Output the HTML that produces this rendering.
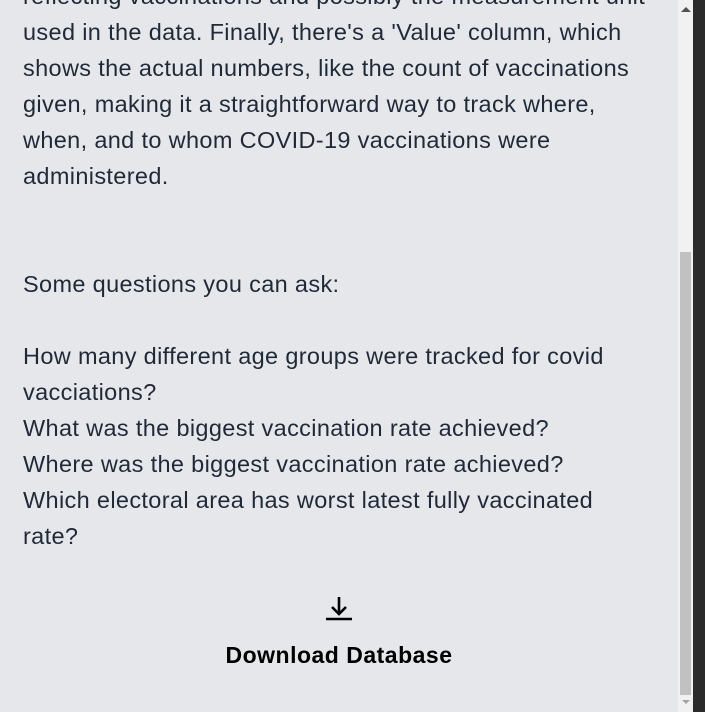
<!DOCTYPE html>
<html><head><style>
html,body{margin:0;padding:0;}
body{width:705px;height:712px;overflow:hidden;background:#e5e7eb;position:relative;font-family:"Liberation Sans",sans-serif;color:#1f2937;}
.t{position:absolute;left:23px;top:-22px;font-size:23.5px;letter-spacing:0.35px;line-height:36px;white-space:nowrap;}
.sb{position:absolute;left:678px;top:0;width:15px;height:712px;background:#f1f1f1;}
.th{position:absolute;left:680px;top:252px;width:11px;height:443px;background:#c1c1c1;}
.dk{position:absolute;left:693px;top:0;width:12px;height:712px;background:#2b2b2b;}
.dl{position:absolute;left:0;width:678px;text-align:center;top:642px;font-weight:bold;font-size:23px;letter-spacing:0.5px;color:#000;}
</style></head><body>
<div class="t">reflecting vaccinations and possibly the measurement unit<br>used in the data. Finally, there's a 'Value' column, which<br>shows the actual numbers, like the count of vaccinations<br>given, making it a straightforward way to track where,<br>when, and to whom COVID-19 vaccinations were<br>administered.<br><br><br>Some questions you can ask:<br><br>How many different age groups were tracked for covid<br>vacciations?<br>What was the biggest vaccination rate achieved?<br>Where was the biggest vaccination rate achieved?<br>Which electoral area has worst latest fully vaccinated<br>rate?</div>
<svg style="position:absolute;left:325px;top:594px" width="28" height="28" viewBox="0 0 28 28"><path d="M14 3V20M7 13l7 7 7-7" stroke="#000" stroke-width="2.6" fill="none"/><path d="M1 25H27" stroke="#000" stroke-width="2.6"/></svg>
<div class="dl">Download Database</div>
<div class="sb"></div><div class="th"></div><div class="dk"></div>
<div style="position:absolute;left:681px;top:7px;width:0;height:0;border-left:5px solid transparent;border-right:5px solid transparent;border-bottom:5px solid #505050"></div>
<div style="position:absolute;left:682px;top:700px;width:0;height:0;border-left:4px solid transparent;border-right:4px solid transparent;border-top:4px solid #a3a3a3"></div>
</body></html>
